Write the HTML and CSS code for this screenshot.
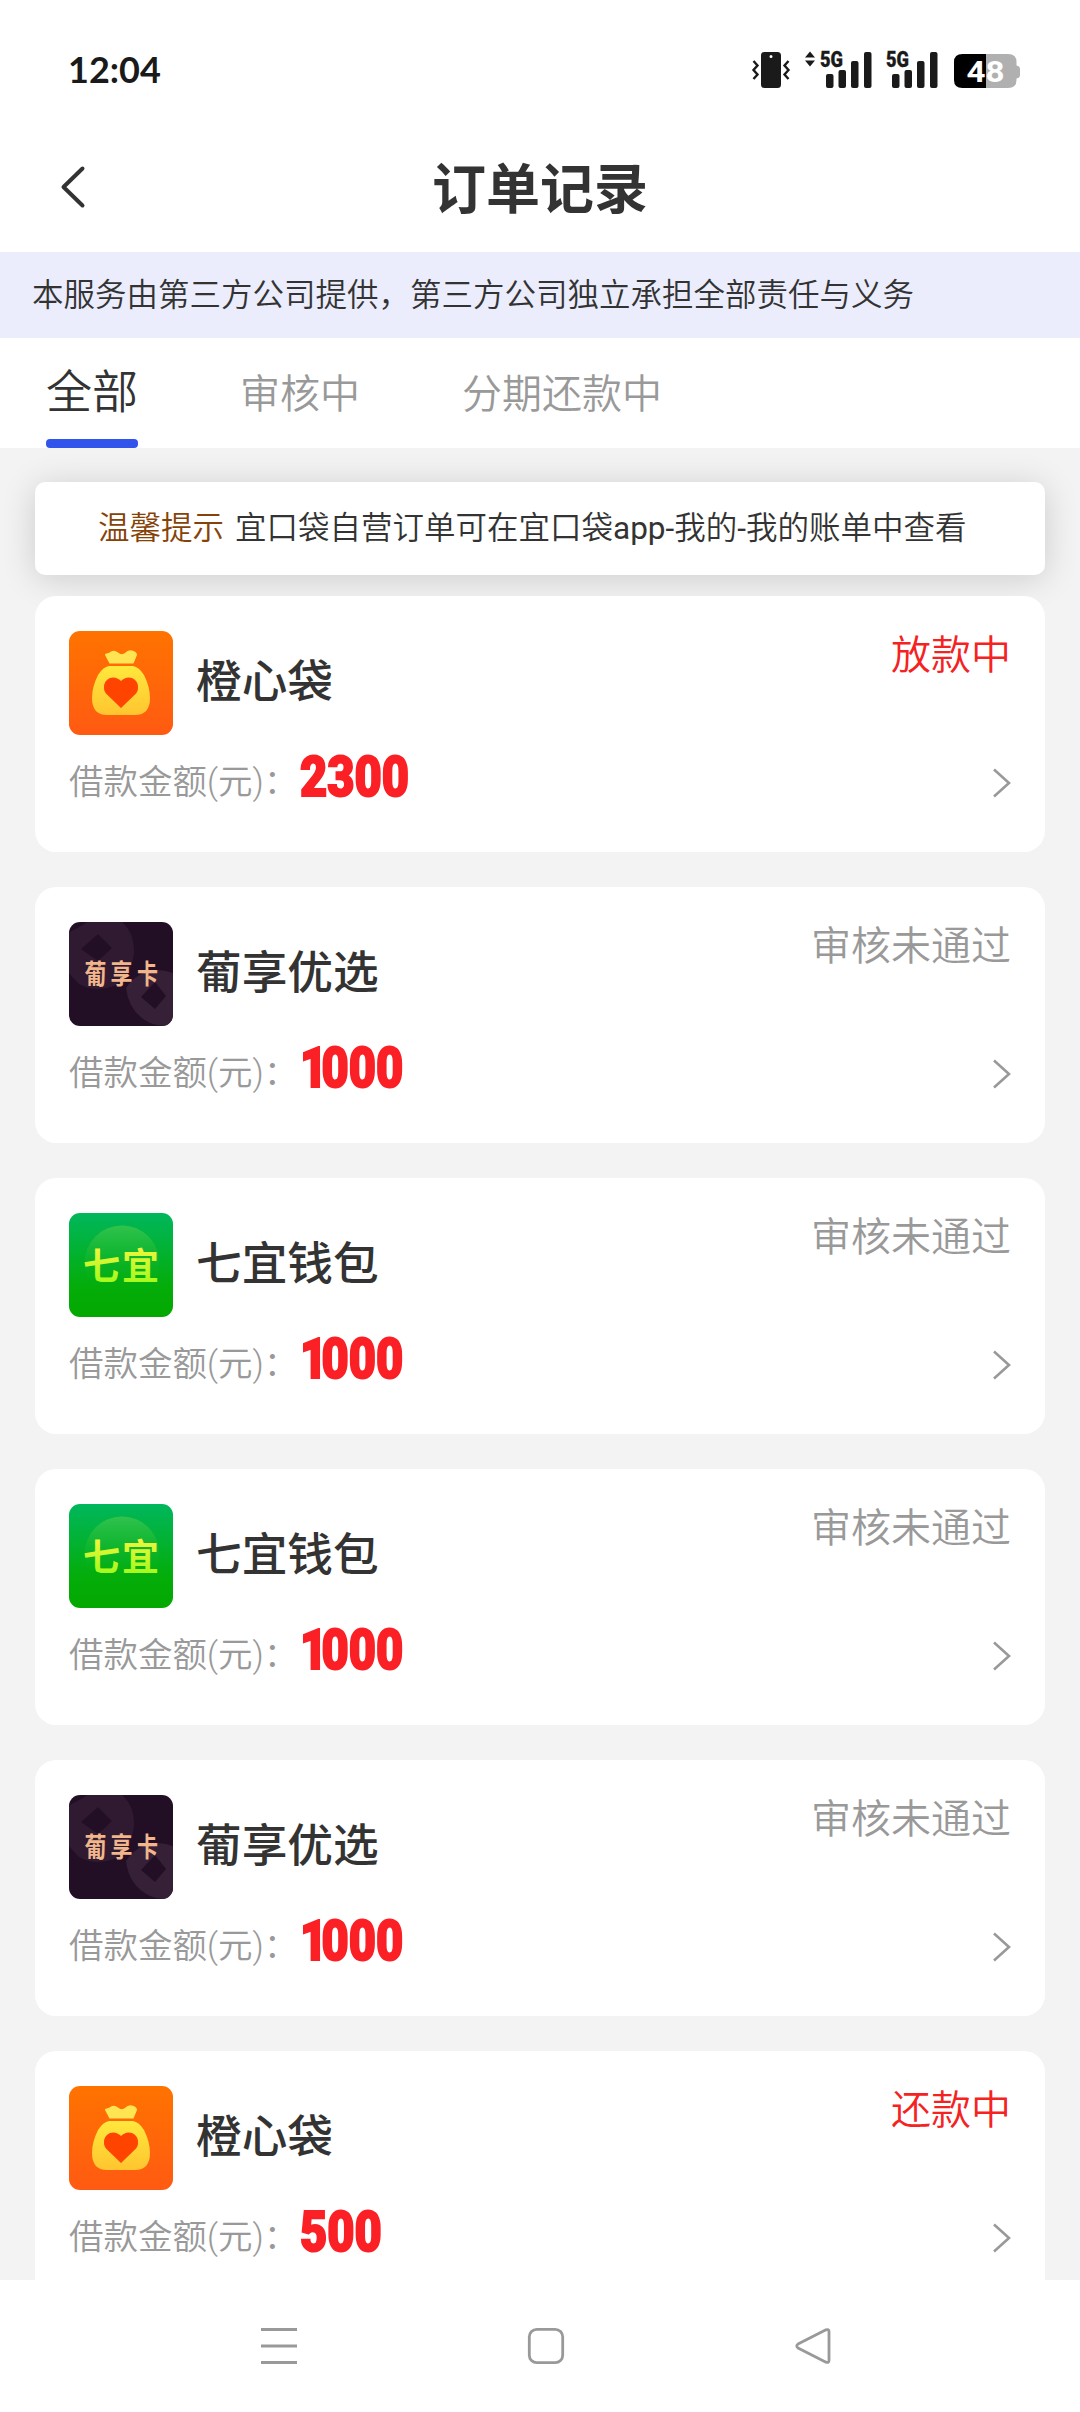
FILE: index.html
```html
<!DOCTYPE html>
<html lang="zh-CN">
<head>
<meta charset="utf-8">
<title>订单记录</title>
<link rel="stylesheet" href="styles.css">
</head>
<body>
<svg class="defs" width="0" height="0" aria-hidden="true">
  <defs>
    <linearGradient id="orange" x1="0" y1="0" x2="0" y2="1"><stop offset="0" stop-color="#ff7300"/><stop offset="1" stop-color="#ff5a12"/></linearGradient>
    <linearGradient id="gold" x1="0" y1="0" x2="0" y2="1"><stop offset="0" stop-color="#ffe83c"/><stop offset="1" stop-color="#ffc530"/></linearGradient>
    <linearGradient id="green" x1="0" y1="0" x2="0" y2="1"><stop offset="0" stop-color="#00b75c"/><stop offset=".7" stop-color="#04ad0a"/><stop offset="1" stop-color="#04a800"/></linearGradient>
    <linearGradient id="glow" x1="0" y1="0" x2="0" y2="1"><stop offset="0" stop-color="#62d04c" stop-opacity=".5"/><stop offset=".75" stop-color="#20b820" stop-opacity="0"/></linearGradient>
    <linearGradient id="lime" x1="0" y1="0" x2="0" y2="1"><stop offset="0.2" stop-color="#f2f53c"/><stop offset=".85" stop-color="#a2fa1c"/></linearGradient>
    <symbol id="logo-bag" viewBox="0 0 104 104">
      <rect width="104" height="104" fill="url(#orange)"/>
      <path fill="#ffe552" d="M36 24q-.5-1.500 1.500-1.500 3-.3 4.500-2 3.500-2 7 1 3.500 3 7 .5 3-3.500 7-2.500 5 1 5 4.500L64.500 32.500H40.500Z"/>
      <path fill="url(#gold)" d="M40 35H64Q70 36 75 44 81 56 81 67 81 84 66 84H38Q23 84 23 67 23 56 29 44 34 36 40 35Z"/>
      <path fill="#ff4400" d="M52 50Q47 45 41 47 34.500 50 35 57 35 61 38.500 64L52 77 65.500 64Q69 61 69 57 69.500 50 63 47 57 45 52 50Z"/>
    </symbol>
    <symbol id="logo-pu" viewBox="0 0 104 104">
      <rect width="104" height="104" fill="#220f26"/>
      <path fill="#2f1a32" fill-rule="evenodd" d="M14 3A36 36 0 0 1 48 -4Q66 8 65 31 62 55 45 64 26 71 10 62L-3 48V12ZM29 12 43 26 29 39 12 27Z"/>
      <path fill="#352037" fill-rule="evenodd" d="M89 48Q108 49 118 62V98Q98 108 81 101 60 91 57 66 68 49 89 48ZM86 60 97 74 86 87 72 75Z"/>
      <g class="logo-pu-text"><text x="15.500" y="62" textLength="22" lengthAdjust="spacingAndGlyphs">葡</text><text x="41.500" y="62" textLength="22" lengthAdjust="spacingAndGlyphs">享</text><text x="68" y="62" textLength="21" lengthAdjust="spacingAndGlyphs">卡</text></g>
    </symbol>
    <symbol id="logo-qi" viewBox="0 0 104 104">
      <rect width="104" height="104" fill="url(#green)"/>
      <circle cx="53" cy="50" r="37.500" fill="url(#glow)"/>
      <g class="logo-qi-text"><text x="14" y="67">七</text><text x="53" y="67">宜</text></g>
    </symbol>
    <symbol id="chevron" viewBox="0 0 18 30"><path d="M1 1.500 16 15 1 28.500" fill="none" stroke="#999" stroke-width="2.600"/></symbol>
  </defs>
</svg>
<div class="screen">
  <header class="status">
    <span class="time">12:04</span>
    <svg class="indicators" width="274" height="44" viewBox="750 48 274 44">
      <g fill="#1a1a1a">
        <path fill-rule="evenodd" d="M764.500 52H777.500Q781 52 781 55.500V84.500Q781 88 777.500 88H764.500Q761 88 761 84.500V55.500Q761 52 764.500 52ZM771 55A1.500 1.500 0 1 0 771 58 1.500 1.500 0 1 0 771 55Z"/>
        <path d="M810 51.500 815 57.500H805ZM810 66.500 815 60.500H805Z"/>
        <rect x="826" y="74" width="7.500" height="14" rx="2"/><rect x="838.500" y="70" width="7.500" height="18" rx="2"/><rect x="851" y="61" width="7.500" height="27" rx="2"/><rect x="864" y="52" width="7.500" height="36" rx="2"/>
        <rect x="892" y="74" width="7.500" height="14" rx="2"/><rect x="904.500" y="70" width="7.500" height="18" rx="2"/><rect x="917" y="61" width="7.500" height="27" rx="2"/><rect x="930" y="52" width="7.500" height="36" rx="2"/>
      </g>
      <path d="M753.500 61 757.500 65.500 753.500 70 757.500 74.500 753.500 79M788.500 61 784.500 65.500 788.500 70 784.500 74.500 788.500 79" fill="none" stroke="#1a1a1a" stroke-width="2.400"/>
      <text class="net" x="820" y="66.500" textLength="23" lengthAdjust="spacingAndGlyphs">5G</text>
      <text class="net" x="886" y="66.500" textLength="23" lengthAdjust="spacingAndGlyphs">5G</text>
      <path fill="#b0b0b0" d="M986 54H1008Q1016.500 54 1016.500 62V65.500Q1020 66 1020 69V75Q1020 78 1016.500 78.500V80Q1016.500 88 1008 88H986Z"/>
      <path fill="#000" d="M986 54H962.500Q954 54 954 62V80Q954 88 962.500 88H986Z"/>
      <text class="charge" x="966.500" y="82" textLength="38" lengthAdjust="spacingAndGlyphs">48</text>
    </svg>
  </header>
  <nav class="titlebar">
    <svg class="back" width="26" height="44" viewBox="0 0 26 44"><path d="M22.500 3.500 3.500 22 22.500 40.500" fill="none" stroke="#333" stroke-width="4" stroke-linecap="round" stroke-linejoin="round"/></svg>
    <h1 class="title">订单记录</h1>
  </nav>
  <div class="notice">本服务由第三方公司提供，第三方公司独立承担全部责任与义务</div>
  <div class="tabs">
    <span class="tab tab-active">全部</span>
    <span class="tab">审核中</span>
    <span class="tab">分期还款中</span>
  </div>
  <main class="content">
    <div class="tip"><span class="tip-tag">温馨提示</span><span>宜口袋自营订单可在宜口袋<span class="latin">app-</span>我的<span class="latin">-</span>我的账单中查看</span></div>
    <div class="orders">
      <article class="card">
        <div class="head"><svg class="logo"><use href="#logo-bag"/></svg><h2 class="name">橙心袋</h2><span class="state state-live">放款中</span></div>
        <div class="row"><span class="label">借款金额(元)：</span><span class="amount">2300</span><svg class="go"><use href="#chevron"/></svg></div>
      </article>
      <article class="card">
        <div class="head"><svg class="logo"><use href="#logo-pu"/></svg><h2 class="name">葡享优选</h2><span class="state">审核未通过</span></div>
        <div class="row"><span class="label">借款金额(元)：</span><span class="amount amount-thousand">1000</span><svg class="go"><use href="#chevron"/></svg></div>
      </article>
      <article class="card">
        <div class="head"><svg class="logo"><use href="#logo-qi"/></svg><h2 class="name">七宜钱包</h2><span class="state">审核未通过</span></div>
        <div class="row"><span class="label">借款金额(元)：</span><span class="amount amount-thousand">1000</span><svg class="go"><use href="#chevron"/></svg></div>
      </article>
      <article class="card">
        <div class="head"><svg class="logo"><use href="#logo-qi"/></svg><h2 class="name">七宜钱包</h2><span class="state">审核未通过</span></div>
        <div class="row"><span class="label">借款金额(元)：</span><span class="amount amount-thousand">1000</span><svg class="go"><use href="#chevron"/></svg></div>
      </article>
      <article class="card">
        <div class="head"><svg class="logo"><use href="#logo-pu"/></svg><h2 class="name">葡享优选</h2><span class="state">审核未通过</span></div>
        <div class="row"><span class="label">借款金额(元)：</span><span class="amount amount-thousand">1000</span><svg class="go"><use href="#chevron"/></svg></div>
      </article>
      <article class="card">
        <div class="head"><svg class="logo"><use href="#logo-bag"/></svg><h2 class="name">橙心袋</h2><span class="state state-live">还款中</span></div>
        <div class="row"><span class="label">借款金额(元)：</span><span class="amount">500</span><svg class="go"><use href="#chevron"/></svg></div>
      </article>
    </div>
  </main>
  <footer class="navbar">
    <svg width="38" height="40" viewBox="0 0 38 40"><path d="M1 3.500H37M1 20H37M1 36.500H37" stroke="#999" stroke-width="3"/></svg>
    <svg width="38" height="40" viewBox="0 0 38 40"><rect x="2.300" y="3.300" width="33.400" height="33.400" rx="7.500" fill="none" stroke="#999" stroke-width="2.800"/></svg>
    <svg width="38" height="40" viewBox="0 0 38 40"><path d="M32 3.800 4 18Q1.500 20 4 22L32 36.200Q35 37.200 35 34.500V5.500Q35 2.800 32 3.800Z" fill="none" stroke="#999" stroke-width="2.800" stroke-linejoin="round"/></svg>
  </footer>
</div>
</body>
</html>
```

FILE: styles.css
```css
* { box-sizing: border-box; }
body {
  margin: 0;
  background: #fff;
  color: #333;
  font-family: Roboto, "Noto Sans CJK SC", sans-serif;
}
h1, h2 { margin: 0; }
svg { display: block; flex: none; }
.defs { position: absolute; }
.screen {
  width: 1080px;
  height: 2412px;
  display: flex;
  flex-direction: column;
  overflow: hidden;
}
.status {
  height: 140px;
  flex: none;
  display: flex;
  justify-content: space-between;
  padding: 48px 56px 0 68px;
}
.time {
  font: 700 36px/42px Lato, sans-serif;
  color: #1a1a1a;
}
.net { font: 900 21.500px Roboto, sans-serif; fill: #1a1a1a; stroke: #1a1a1a; stroke-width: .3px; }
.charge { font: 700 30px Roboto, sans-serif; fill: #fff; }
.titlebar {
  height: 112px;
  flex: none;
  display: grid;
  grid-template-columns: 26px 1fr 26px;
  padding: 0 60px;
}
.back { margin-top: 25px; }
.title {
  text-align: center;
  font-size: 54px;
  line-height: 101px;
  font-weight: 700;
}
.notice {
  height: 86px;
  flex: none;
  padding-left: 32px;
  background: #ebedfc;
  font-size: 31.500px;
  line-height: 88px;
  font-weight: 350;
  white-space: nowrap;
}
.tabs {
  height: 110px;
  flex: none;
  display: flex;
  gap: 102px;
  padding-left: 46px;
}
.tab {
  font-size: 40px;
  line-height: 113px;
  font-weight: 350;
  color: #999;
}
.tab-active {
  font-size: 46px;
  line-height: 108px;
  color: #333;
}
.tab-active::after {
  content: "";
  display: block;
  height: 9px;
  margin-top: -7px;
  border-radius: 4px;
  background: #3154ec;
}
.content {
  flex: 1;
  min-height: 0;
  overflow: hidden;
  padding: 34px 35px 0;
  background: #f3f3f3;
}
.tip {
  height: 93px;
  display: flex;
  gap: 11px;
  padding-left: 63px;
  border-radius: 10px;
  background: #fff;
  box-shadow: 0 4px 34px rgba(0, 0, 0, .16);
  font-size: 31.500px;
  line-height: 93px;
  font-weight: 350;
  white-space: nowrap;
}
.tip-tag { color: #854309; }
.latin { font-weight: 400; }
.orders {
  position: relative;
  display: flex;
  flex-direction: column;
  gap: 35px;
  margin-top: 21px;
}
.card {
  height: 256px;
  flex: none;
  padding: 35px 34px 0;
  border-radius: 21px;
  background: #fff;
}
.head { display: flex; height: 104px; }
.logo { width: 104px; height: 104px; border-radius: 11px; }
.logo-pu-text { font: 700 27px "Noto Sans CJK SC", sans-serif; fill: #f1b68b; }
.logo-qi-text { font: 700 37px "Noto Sans CJK SC", sans-serif; fill: url(#lime); }
.name {
  margin-left: 23px;
  font-size: 45.700px;
  line-height: 104px;
  font-weight: 500;
}
.state {
  margin-left: auto;
  font-size: 40px;
  line-height: 49px;
  font-weight: 350;
  color: #999;
}
.state-live { color: #f52222; }
.row { display: flex; align-items: center; height: 94px; }
.label {
  width: 231px;
  font-size: 34.500px;
  line-height: 94px;
  font-weight: 350;
  color: #999;
  white-space: nowrap;
}
.amount {
  height: 94px;
  font: 900 56px/85px Roboto, sans-serif;
  color: #fb2025;
  -webkit-text-stroke: 2px #fb2025;
  transform: scaleX(.84);
  transform-origin: left;
}
.amount-thousand::first-letter { letter-spacing: -7px; }
.go { width: 18px; height: 30px; margin-left: auto; margin-top: 1px; }
.navbar {
  height: 132px;
  flex: none;
  display: flex;
  justify-content: space-between;
  padding: 46px 248px 0 260px;
  background: #fff;
}
```
